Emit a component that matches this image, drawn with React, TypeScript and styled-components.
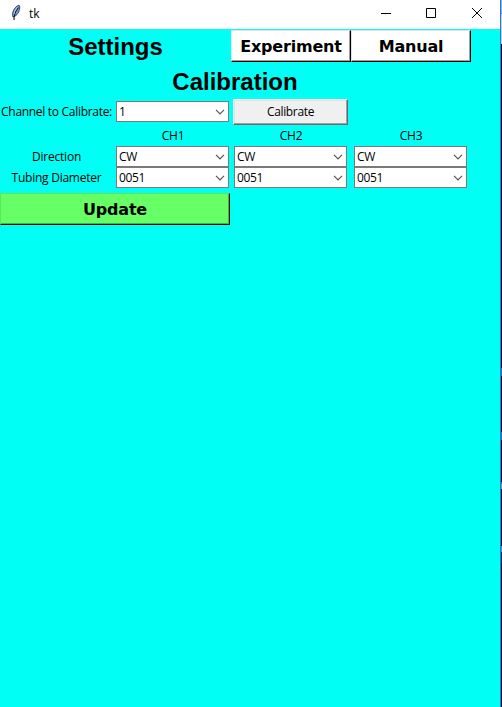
import React from 'react';
import styled, { createGlobalStyle } from 'styled-components';

const GlobalStyle = createGlobalStyle`
  * { box-sizing: border-box; }
  body { margin: 0; overflow: hidden; }
  button { margin: 0; padding: 0; border-radius: 0; color: #000; }
`;

const Desktop = styled.div`
  display: flex;
  width: 502px;
  height: 707px;
  background: #000;
`;

const Window = styled.main`
  width: 501px;
  height: 707px;
  border-right: 1px solid #1b7fdc;
  background: #00fff5;
  color: #000;
  font: 12px/16px 'Open Sans', 'Noto Sans', sans-serif;
`;

const DesktopEdge = styled.div`
  width: 1px;
  height: 707px;
  background: linear-gradient(
    #8fb2d4 0 13px, #6889ac 13px 14px, #c9cdd2 14px 44px, #000008 44px 368px,
    #2d6ca5 368px 376px, #000008 376px 432px, #2d6ca5 432px 440px,
    #000008 440px 482px, #39699a 482px 484px, #a38d72 484px 489px,
    #000c1c 489px 546px, #5686b8 546px 552px, #06244a 552px 563px,
    #000c1c 563px
  );
`;

const TitleBar = styled.header`
  display: flex;
  align-items: flex-start;
  height: 29px;
  padding-left: 10px;
  background: #fff;
`;

const Feather = styled.svg`
  width: 12px;
  height: 17px;
  margin-top: 4px;
`;

const WindowTitle = styled.span`
  flex: 1;
  margin: 6px 0 0 7px;
`;

const WindowButton = styled.button`
  display: flex;
  align-items: flex-start;
  width: 46px;
  height: 27px;
  padding: 7px 0 0 18px;
  border: 0;
  background: transparent;
`;

const HeaderRow = styled.div`
  display: grid;
  grid-template-columns: 231px 120px 120px;
  height: 35px;
  padding-top: 1px;
`;

const Heading = styled.h1<{ $width: number; $drop?: number }>`
  width: ${p => p.$width}px;
  height: 34px;
  margin: 0;
  padding-top: ${p => p.$drop ?? 0}px;
  font: bold 24px/34px 'Liberation Sans', Arial, sans-serif;
  text-align: center;
`;

const BoldButton = styled.button<{ $color: string; $light: string; $shade: string; $width: number }>`
  width: ${p => p.$width}px;
  height: 32px;
  padding-top: 2px;
  border: 1px solid;
  border-color: ${p => p.$light} #000 #000 ${p => p.$light};
  box-shadow: inset -1px -1px ${p => p.$shade};
  background: ${p => p.$color};
  font: bold 16px/28px 'DejaVu Sans', Verdana, sans-serif;
  letter-spacing: -0.2px;
`;

const CalibrateRow = styled.div`
  display: grid;
  grid-template-columns: 116px 117px 115px;
  align-items: center;
  height: 27px;
`;

const ChannelGrid = styled.div`
  display: grid;
  grid-template-columns: 116px 118px 120px 113px;
  grid-template-rows: 21px 21px 21px;
`;

const Label = styled.label<{ $spacing?: number }>`
  width: 113px;
  line-height: 21px;
  text-align: center;
  letter-spacing: ${p => p.$spacing ?? -0.3}px;
  white-space: nowrap;
`;

const ChannelName = styled(Label)`
  padding-left: 1px;
`;

const Combo = styled.div`
  display: flex;
  justify-content: space-between;
  align-items: center;
  width: 113px;
  height: 21px;
  padding: 0 3px 0 2px;
  border: 1px solid #7a7a7a;
  background: #fff;
  letter-spacing: -0.4px;
`;

const CalibrateButton = styled.button`
  align-self: end;
  width: 115px;
  height: 26px;
  border: 1px solid;
  border-color: #fff #696969 #696969 #fff;
  box-shadow: inset -1px -1px #a0a0a0, inset 1px 1px #e3e3e3;
  background: #f0f0f0;
  font: 12px/22px 'Open Sans', 'Noto Sans', sans-serif;
  letter-spacing: -0.35px;
`;

const UpdateRow = styled.div`
  padding-top: 5px;
`;

function Select({ value }: { value: string }) {
  return (
    <Combo role="combobox" aria-expanded={false}>
      {value}
      <svg width="10" height="6" viewBox="0 0 10 6" fill="none" stroke="#555" strokeWidth="1.2">
        <path d="M1 .8 5 4.8 9 .8" />
      </svg>
    </Combo>
  );
}

const channels = ['CH1', 'CH2', 'CH3'];

export default function App() {
  return (
    <>
      <GlobalStyle />
      <Desktop>
        <Window>
          <TitleBar>
            <Feather viewBox="0 0 12 17">
              <path d="M3 13C1.5 9 4 3 9 1.2c1.600 1.300.5 6.500-2 9.300-1 1.200-2.500 2-4 2.500Z" fill="#6fa3dc" stroke="#26364a" strokeWidth=".9" />
              <path d="M4 16C3.800 11 5.500 7 8.500 3.500" fill="none" stroke="#111" strokeWidth="1.1" />
              <path d="M4.500 7.500 7.500 3M4 10l.8-2" fill="none" stroke="#b8d8f4" strokeWidth=".8" />
            </Feather>
            <WindowTitle>tk</WindowTitle>
            <WindowButton aria-label="Minimize">
              <svg width="11" height="11"><path d="M1 6.5h10" stroke="#000" /></svg>
            </WindowButton>
            <WindowButton aria-label="Maximize">
              <svg width="11" height="11"><path d="M.5 1.5h9v9h-9z" fill="none" stroke="#000" /></svg>
            </WindowButton>
            <WindowButton aria-label="Close">
              <svg width="11" height="11"><path d="m0 1 10 10m0-10-10 10" stroke="#000" /></svg>
            </WindowButton>
          </TitleBar>

          <HeaderRow>
            <Heading $width={231}>Settings</Heading>
            <BoldButton $width={120} $color="#fff" $light="#e3e3e3" $shade="#a0a0a0">Experiment</BoldButton>
            <BoldButton $width={120} $color="#fff" $light="#e3e3e3" $shade="#a0a0a0">Manual</BoldButton>
          </HeaderRow>
          <Heading as="h2" $width={470} $drop={1}>Calibration</Heading>

          <CalibrateRow>
            <Label>Channel to Calibrate:</Label>
            <Select value="1" />
            <CalibrateButton>Calibrate</CalibrateButton>
          </CalibrateRow>

          <ChannelGrid>
            <span />
            {channels.map(name => <ChannelName key={name} $spacing={-0.2}>{name}</ChannelName>)}
            <Label $spacing={-0.2}>Direction</Label>
            {channels.map(name => <Select key={name} value="CW" />)}
            <Label $spacing={-0.25}>Tubing Diameter</Label>
            {channels.map(name => <Select key={name} value="0051" />)}
          </ChannelGrid>

          <UpdateRow>
            <BoldButton $width={230} $color="#66ff66" $light="#5ce65c" $shade="#47b347">Update</BoldButton>
          </UpdateRow>
        </Window>
        <DesktopEdge />
      </Desktop>
    </>
  );
}
